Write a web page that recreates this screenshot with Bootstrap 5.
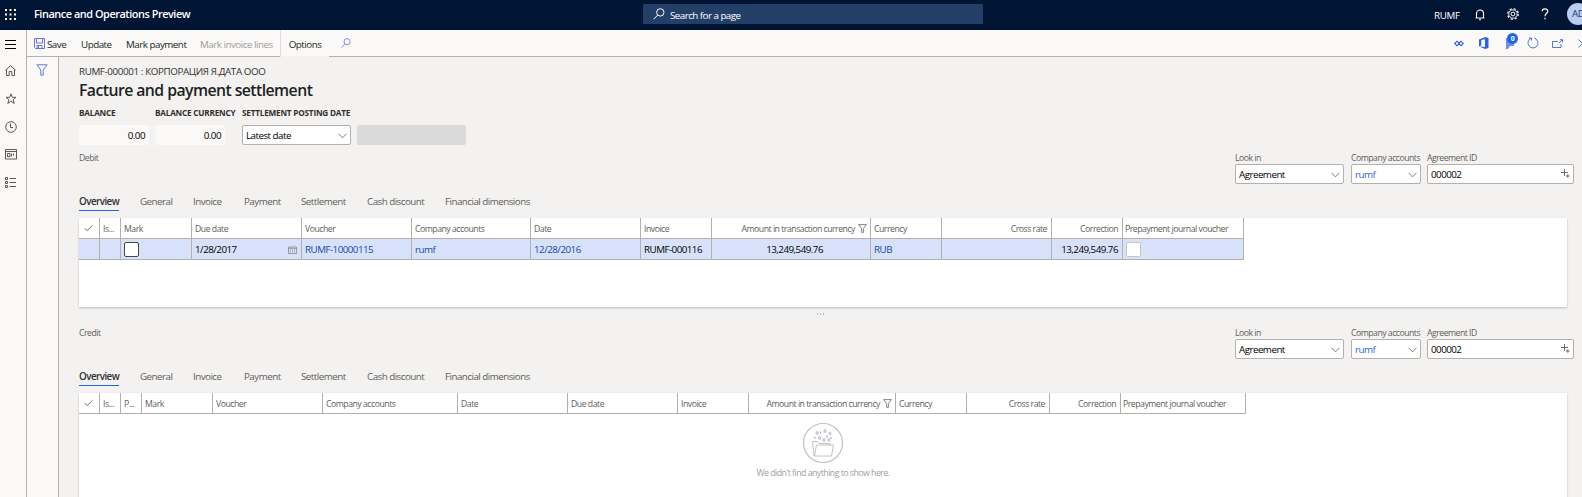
<!DOCTYPE html>
<html lang="en">
<head>
<meta charset="utf-8">
<title>Facture and payment settlement</title>
<link rel="stylesheet" href="https://cdn.jsdelivr.net/npm/bootstrap@5.3.0/dist/css/bootstrap.min.css">
<style>
html,body{height:497px;overflow:hidden}
body{font-family:"Open Sans","Noto Sans",sans-serif;font-size:9.8px;letter-spacing:-.53px;line-height:14px;color:#323130;background:#f3f2f1}
svg{display:block;fill:none;stroke:currentColor;flex:none}
.topbar{height:30px;background:#001433;color:#fff;padding-left:34px;position:relative;overflow:hidden}
.topbar>*{flex:none}
.brand{font-size:10.9px;font-weight:600;width:609px;letter-spacing:-.45px;margin-top:-3px}
.finder{width:340px;height:20px;background:#243f67;border-radius:1px;padding-left:10px;margin-top:-2px}
.finder span{padding:3px 0 0 5px}
.avatar{width:22px;height:22px;background:#b9cdf5;color:#243a5e;flex:none;padding-left:5px}
.rail{width:27px;border-right:1px solid #b3b0ad;background:#faf9f8;color:#55534f;padding-right:5px}
.rail>div{height:28px}
.rail>div:first-child svg{margin-top:1px}
.rail>div:not(:first-child) svg{margin-top:-3px;stroke-width:.95}
.cmdbar{height:27px;background:#faf9f8;border-bottom:1px solid #b3b0ad;color:#201f1e;letter-spacing:-.5px;overflow:visible}
.cmdbar>span,.opt span{padding-top:3px;white-space:nowrap}
.opt{height:27px;width:49px;border-left:1px solid #e1dfdd;margin:0 0 -1px -1px;padding-bottom:1px;background:linear-gradient(#faf9f8 26px,#f3f2f1 26px)}
.filters{width:32px;border-right:1px solid #b3b0ad;background:#faf9f8}
.blue{color:#6a74e4}
.page{padding:8px 8px 0 20px}
.crumb{letter-spacing:-.38px}
.head{font-size:15.8px;font-weight:600;line-height:22px;color:#201f1e;height:27px;letter-spacing:-.56px}
.cap{font-size:8.2px;font-weight:700;line-height:14px;height:19px;white-space:nowrap;letter-spacing:-.21px}
.inp{height:20px;border:1px solid #b3b0ad;border-radius:2px;background:#fff;color:#000;padding:1px 3px 0 3px;line-height:18px}
.inp svg{color:#605e5c;stroke-width:.9}
.ro{border-color:#faf9f8;background:#faf9f8}
.off{border-color:#dadada;background:#dadada}
.lab{font-size:8.7px;color:#605e5c;height:14px;line-height:16px;white-space:nowrap;letter-spacing:-.5px}
.zone{height:45px;margin-top:5px}
.grip{height:18px;padding-top:6px;margin-right:13px}
.grip i{width:1px;height:2px;background:#c0bebc;margin:0 1px}
.zone.two{margin-top:0}
.tabrow{height:16px;color:#605e5c}
.tabrow span{white-space:nowrap}
.tabrow .on{color:#323130;font-weight:600;border-bottom:1px solid #2266e3;height:16px;width:40px;margin-right:21px}
.sheet{background:#fff;margin:7px 7px 0 0;width:1488px;box-shadow:0 1px 2px rgba(0,0,0,.22)}
.lines{table-layout:fixed;border-collapse:separate;border-spacing:0}
.lines th,.lines td{height:21px;padding:0 4px 0 3px;border-right:1px solid #b3b0ad;border-bottom:1px solid #b3b0ad;white-space:nowrap;overflow:hidden;line-height:14px}
.lines th{font-weight:400;font-size:8.7px;color:#605e5c;letter-spacing:-.48px;padding-top:1px}
.lines th.text-end:not(:last-child){padding-right:4px}
.lines th .justify-content-end{margin-right:-1px}
.lines td{background:#d7e2fa;color:#000;padding-top:1px}
.lines td:first-child,.lines th:first-child{padding:0 5px}
.lines th:last-child{padding-left:2px}
.lnk{color:#2247a8 !important}
.box{width:15px;height:15px;border:1px solid #484644;border-radius:2px;background:#fff}
.box.dim{border-color:#c8c6c4}
.none{color:#a19f9d;font-size:8.8px;letter-spacing:-.54px}
</style>
</head>
<body class="d-flex flex-column">
<svg width="0" height="0" class="position-absolute">
<symbol id="funnel" viewBox="0 0 12 12"><path d="M.8.8h10.4L7.2 6v5.2H4.8V6z"/></symbol>
<symbol id="chev" viewBox="0 0 10 6"><path d="M.6.6L5 5 9.4.6"/></symbol>
<symbol id="tick" viewBox="0 0 10 8"><path d="M.8 4.2L3.600 7 9.400 1"/></symbol>
<symbol id="lens" viewBox="0 0 12 12"><circle cx="7.300" cy="4.400" r="3.700"/><path d="M4.600 7.200L.5 11.300"/></symbol>
<symbol id="pick" viewBox="0 0 9 9"><path d="M3.500 0v7M0 3.500h7M5 7h3.500M6.800 5.300v3.400"/></symbol>
</svg>

<header class="topbar d-flex align-items-center flex-shrink-0">
 <svg class="position-absolute" style="left:5px;top:9px" width="11" height="11" viewBox="0 0 11 11"><path stroke-width="2" stroke-dasharray="2 2.5" d="M0 1h11M0 5.500h11M0 10h11"/></svg>
 <div class="brand"><span>Finance and Operations Preview</span></div>
 <div class="finder d-flex align-items-center"><svg width="12" height="12"><use href="#lens"/></svg><span>Search for a page</span></div>
 <div class="d-flex align-items-center" style="margin-left:451px">
  <span style="width:41px;letter-spacing:-.3px;padding-top:1px">RUMF</span>
  <svg width="10" height="12" viewBox="0 0 10 12"><path d="M.5 9h9M1.500 9V4.500a3.500 3.500 0 0 1 7 0V9M4 10.800h2" stroke-width="1.100"/></svg>
  <svg width="12" height="12" viewBox="0 0 12 12" style="margin:-2px 0 0 22px"><circle cx="6" cy="6" r="5.300" stroke-dasharray="2.200 1.960" stroke-width="1.200"/><circle cx="6" cy="6" r="4.200" stroke-width=".9"/><circle cx="6" cy="6" r="1.900"/></svg>
  <svg width="8" height="12" viewBox="0 0 8 12" style="margin:-2px 0 0 22px"><path stroke-width="1.200" d="M1.200 3.200C1.200 0 6.800 0 6.800 3.200 6.800 5.300 4 5.400 4 8.300M4 9.700v1.600"/></svg>
  <span class="avatar rounded-circle d-flex align-items-center" style="margin:-2px 0 0 18px">AD</span>
 </div>
</header>

<div class="d-flex flex-grow-1">
 <nav class="rail flex-shrink-0 d-flex flex-column align-items-center">
  <div class="d-flex align-items-center text-black"><svg width="11" height="9" viewBox="0 0 11 9"><path d="M0 .5h11M0 4.500h11M0 8.500h11"/></svg></div>
  <div class="d-flex align-items-center"><svg width="11" height="11" viewBox="0 0 11 11"><path d="M.3 5.300L5.500.7l5.200 4.600M1.500 4.500v6h2.700v-4h2.600v4h2.700v-6"/></svg></div>
  <div class="d-flex align-items-center"><svg width="12" height="12" viewBox="0 0 12 12"><path d="M6 .9l1.300 3.400h3.700L8.100 6.600l1.100 3.900L6 8.200l-3.200 2.300 1.100-3.900L1 4.300h3.700z"/></svg></div>
  <div class="d-flex align-items-center"><svg width="12" height="12" viewBox="0 0 12 12"><circle cx="6" cy="6" r="5.300"/><path d="M5.500 2.500v4H8"/></svg></div>
  <div class="d-flex align-items-center"><svg width="12" height="11" viewBox="0 0 12 11"><path d="M.5.500h11v9.500H.5zM.5 2.500h11M2.500 4.500h2.500v3h-2.500zM6.500 7.500v-3M8.500 4.500v2M2 7.500h3"/></svg></div>
  <div class="d-flex align-items-center"><svg width="12" height="11" viewBox="0 0 12 11"><path d="M.5.500h2v2h-2zM.5 4.500h2v2h-2zM.5 8.500h2v2h-2zM4.500 1.500H11M4.500 5.500H11M4.500 9.500H11"/></svg></div>
 </nav>

 <div class="flex-grow-1 d-flex flex-column">
  <div class="cmdbar d-flex align-items-center flex-shrink-0">
   <svg class="blue" style="margin:0 2px 0 7px" width="11" height="11" viewBox="0 0 11 11"><path d="M.5.500h10v10h-9l-1-1zM2.500.500v4.500h6V.500M3 10.500V7.500h5v3M4.500 8v2.500"/></svg>
   <span style="width:34px">Save</span><span style="width:45px">Update</span><span style="width:74px">Mark payment</span><span style="width:81px;color:#a19f9d">Mark invoice lines</span>
   <div class="opt d-flex align-items-center justify-content-center"><span>Options</span></div>
   <svg class="blue" style="margin:0 0 0 12px" width="10" height="10"><use href="#lens" width="10" height="10"/></svg>
   <div class="d-flex align-items-center ms-auto" style="color:#2f62e0;margin-right:-1px">
    <svg width="10" height="7" viewBox="0 0 10 7"><path d="M.7 3.500L3 1.200l2.300 2.300L3 5.800zM4.700 3.500L7 1.200l2.300 2.300L7 5.800z" stroke-width="1.100"/></svg>
    <svg width="10" height="12" viewBox="0 0 10 12" style="margin-left:15px"><path fill="currentColor" stroke="none" d="M0 2.500L6.300 0 9.500 1v10l-3.200 1L0 9.500l6 .6V2.200L2.300 3v5.300L0 9.500z"/></svg>
    <span class="position-relative" style="margin-left:17px"><svg width="11" height="12" viewBox="0 0 11 12"><path fill="currentColor" stroke="none" d="M0 1h8v8H4l-2 3H0z" opacity=".7"/></svg><span class="position-absolute rounded-circle text-center text-white fw-bold" style="left:1px;top:-4px;width:11px;height:11px;background:#2266e3;font-size:7px;line-height:11px">0</span></span>
    <svg width="12" height="12" viewBox="0 0 12 12" style="margin-left:10px;stroke-width:.85"><path d="M4.200 1.300a5 5 0 1 0 3.600 0M4.500 3.500V1H2M7.500 1l1.200.6"/></svg>
    <svg width="11" height="9" viewBox="0 0 11 9" style="margin-left:13px;stroke-width:.85"><path d="M6 2.500H.5v6h8.500V5M7 4l3.300-3.300M8 .700h2.500v2.500"/></svg>
    <svg width="5" height="9" viewBox="0 0 5 9" style="margin-left:15px;stroke-width:.85"><path d="M.5.500l4 4-4 4"/></svg>
   </div>
  </div>

  <div class="d-flex flex-grow-1">
   <aside class="filters flex-shrink-0 blue"><svg width="12" height="12" style="margin:7px 0 0 9px"><use href="#funnel"/></svg></aside>
   <main class="page flex-grow-1">
    <div class="crumb"><span>RUMF-000001 : КОРПОРАЦИЯ Я.ДАТА ООО</span></div>
    <div class="head"><span>Facture and payment settlement</span></div>
    <div class="d-flex">
     <div style="width:76px"><div class="cap"><span>BALANCE</span></div><div class="inp ro text-end" style="width:70px">0.00</div></div>
     <div style="width:87px"><div class="cap"><span>BALANCE CURRENCY</span></div><div class="inp ro text-end" style="width:70px">0.00</div></div>
     <div style="width:115px"><div class="cap"><span>SETTLEMENT POSTING DATE</span></div><div class="inp d-flex align-items-center justify-content-between" style="width:109px"><span>Latest date</span><svg width="9" height="6"><use href="#chev"/></svg></div></div>
     <div><div class="cap"></div><div class="inp off" style="width:109px"></div></div>
    </div>

    <div class="zone d-flex">
     <div class="lab" style="width:1156px"><span>Debit</span></div>
     <div style="width:116px"><div class="lab"><span>Look in</span></div><div class="inp d-flex align-items-center justify-content-between" style="width:109px"><span>Agreement</span><svg width="9" height="6"><use href="#chev"/></svg></div></div>
     <div style="width:76px"><div class="lab"><span>Company accounts</span></div><div class="inp d-flex align-items-center justify-content-between" style="width:70px"><span style="color:#2f62e0">rumf</span><svg width="9" height="6"><use href="#chev"/></svg></div></div>
     <div><div class="lab"><span>Agreement ID</span></div><div class="inp d-flex align-items-center justify-content-between" style="width:147px"><span>000002</span><svg width="9" height="9" style="margin-bottom:2px"><use href="#pick"/></svg></div></div>
    </div>
    <div class="tabrow d-flex"><span class="on">Overview</span><span style="width:53px">General</span><span style="width:51px">Invoice</span><span style="width:57px">Payment</span><span style="width:66px">Settlement</span><span style="width:78px">Cash discount</span><span>Financial dimensions</span></div>
    <div class="sheet" style="height:89px">
     <table class="lines" style="width:1165px">
      <colgroup><col style="width:21px"><col style="width:21px"><col style="width:71px"><col style="width:110px"><col style="width:110px"><col style="width:119px"><col style="width:110px"><col style="width:71px"><col style="width:159px"><col style="width:71px"><col style="width:110px"><col style="width:71px"><col style="width:121px"></colgroup>
      <tr><th><svg width="9" height="8"><use href="#tick"/></svg></th><th>Is...</th><th>Mark</th><th>Due date</th><th>Voucher</th><th>Company accounts</th><th>Date</th><th>Invoice</th><th><div class="d-flex align-items-center justify-content-end"><span>Amount in transaction currency</span><svg width="9" height="9" style="margin-left:3px"><use href="#funnel"/></svg></div></th><th>Currency</th><th class="text-end">Cross rate</th><th class="text-end">Correction</th><th>Prepayment journal voucher</th></tr>
      <tr><td></td><td></td><td><div class="box"></div></td><td><div class="d-flex align-items-center justify-content-between"><span>1/28/2017</span><svg width="9" height="8" viewBox="0 0 9 8" style="color:#8a8886"><path d="M.5 1h8v6.500h-8zM0 2.300h9M2 4h1M4 4h1M6 4h1M2 5.700h1M4 5.700h1M6 5.700h1" stroke-width=".8"/></svg></div></td><td class="lnk">RUMF-10000115</td><td class="lnk">rumf</td><td class="lnk">12/28/2016</td><td>RUMF-000116</td><td class="text-end" style="padding-right:47px">13,249,549.76</td><td class="lnk">RUB</td><td></td><td class="text-end">13,249,549.76</td><td><div class="box dim"></div></td></tr>
     </table>
    </div>
    <div class="grip d-flex justify-content-center"><i></i><i></i><i></i></div>

    <div class="zone two d-flex">
     <div class="lab" style="width:1156px"><span>Credit</span></div>
     <div style="width:116px"><div class="lab"><span>Look in</span></div><div class="inp d-flex align-items-center justify-content-between" style="width:109px"><span>Agreement</span><svg width="9" height="6"><use href="#chev"/></svg></div></div>
     <div style="width:76px"><div class="lab"><span>Company accounts</span></div><div class="inp d-flex align-items-center justify-content-between" style="width:70px"><span style="color:#2f62e0">rumf</span><svg width="9" height="6"><use href="#chev"/></svg></div></div>
     <div><div class="lab"><span>Agreement ID</span></div><div class="inp d-flex align-items-center justify-content-between" style="width:147px"><span>000002</span><svg width="9" height="9" style="margin-bottom:2px"><use href="#pick"/></svg></div></div>
    </div>
    <div class="tabrow d-flex"><span class="on">Overview</span><span style="width:53px">General</span><span style="width:51px">Invoice</span><span style="width:57px">Payment</span><span style="width:66px">Settlement</span><span style="width:78px">Cash discount</span><span>Financial dimensions</span></div>
    <div class="sheet" style="height:104px">
     <table class="lines" style="width:1167px">
      <colgroup><col style="width:21px"><col style="width:21px"><col style="width:21px"><col style="width:71px"><col style="width:110px"><col style="width:135px"><col style="width:110px"><col style="width:110px"><col style="width:71px"><col style="width:147px"><col style="width:71px"><col style="width:83px"><col style="width:71px"><col style="width:125px"></colgroup>
      <tr><th><svg width="9" height="8"><use href="#tick"/></svg></th><th>Is...</th><th>P...</th><th>Mark</th><th>Voucher</th><th>Company accounts</th><th>Date</th><th>Due date</th><th>Invoice</th><th><div class="d-flex align-items-center justify-content-end"><span>Amount in transaction currency</span><svg width="9" height="9" style="margin-left:3px"><use href="#funnel"/></svg></div></th><th>Currency</th><th class="text-end">Cross rate</th><th class="text-end">Correction</th><th>Prepayment journal voucher</th></tr>
     </table>
     <div class="none d-flex flex-column align-items-center pt-2">
      <svg width="42" height="42" viewBox="0 0 42 42"><g style="color:#c4c2c0" stroke="#c4c2c0"><circle cx="21" cy="21" r="19.500" stroke-width="1.200"/><path d="M12 34L10.500 19.500h5l1.500 2h11v2M12.500 34l2-11h17l-2 11z"/><path stroke="#a9afbd" stroke-width="1.100" d="M12 15l1.500 1.500M18.500 9.500v2M29 15v2M25 13v3"/><g stroke="#a9afbd" stroke-width=".9"><ellipse cx="15" cy="11" rx="1" ry="1.500"/><ellipse cx="23" cy="9" rx="1" ry="1.500"/><ellipse cx="28" cy="11.500" rx="1" ry="1.500"/><ellipse cx="17.500" cy="16" rx="1" ry="1.500"/><ellipse cx="22" cy="18" rx="1" ry="1.500"/><ellipse cx="27" cy="18" rx="1" ry="1.500"/></g></g></svg>
      <span class="pt-1" style="margin-top:-2px">We didn't find anything to show here.</span>
     </div>
    </div>
   </main>
  </div>
 </div>
</div>
<script src="https://cdn.jsdelivr.net/npm/bootstrap@5.3.0/dist/js/bootstrap.bundle.min.js"></script>
</body>
</html>
